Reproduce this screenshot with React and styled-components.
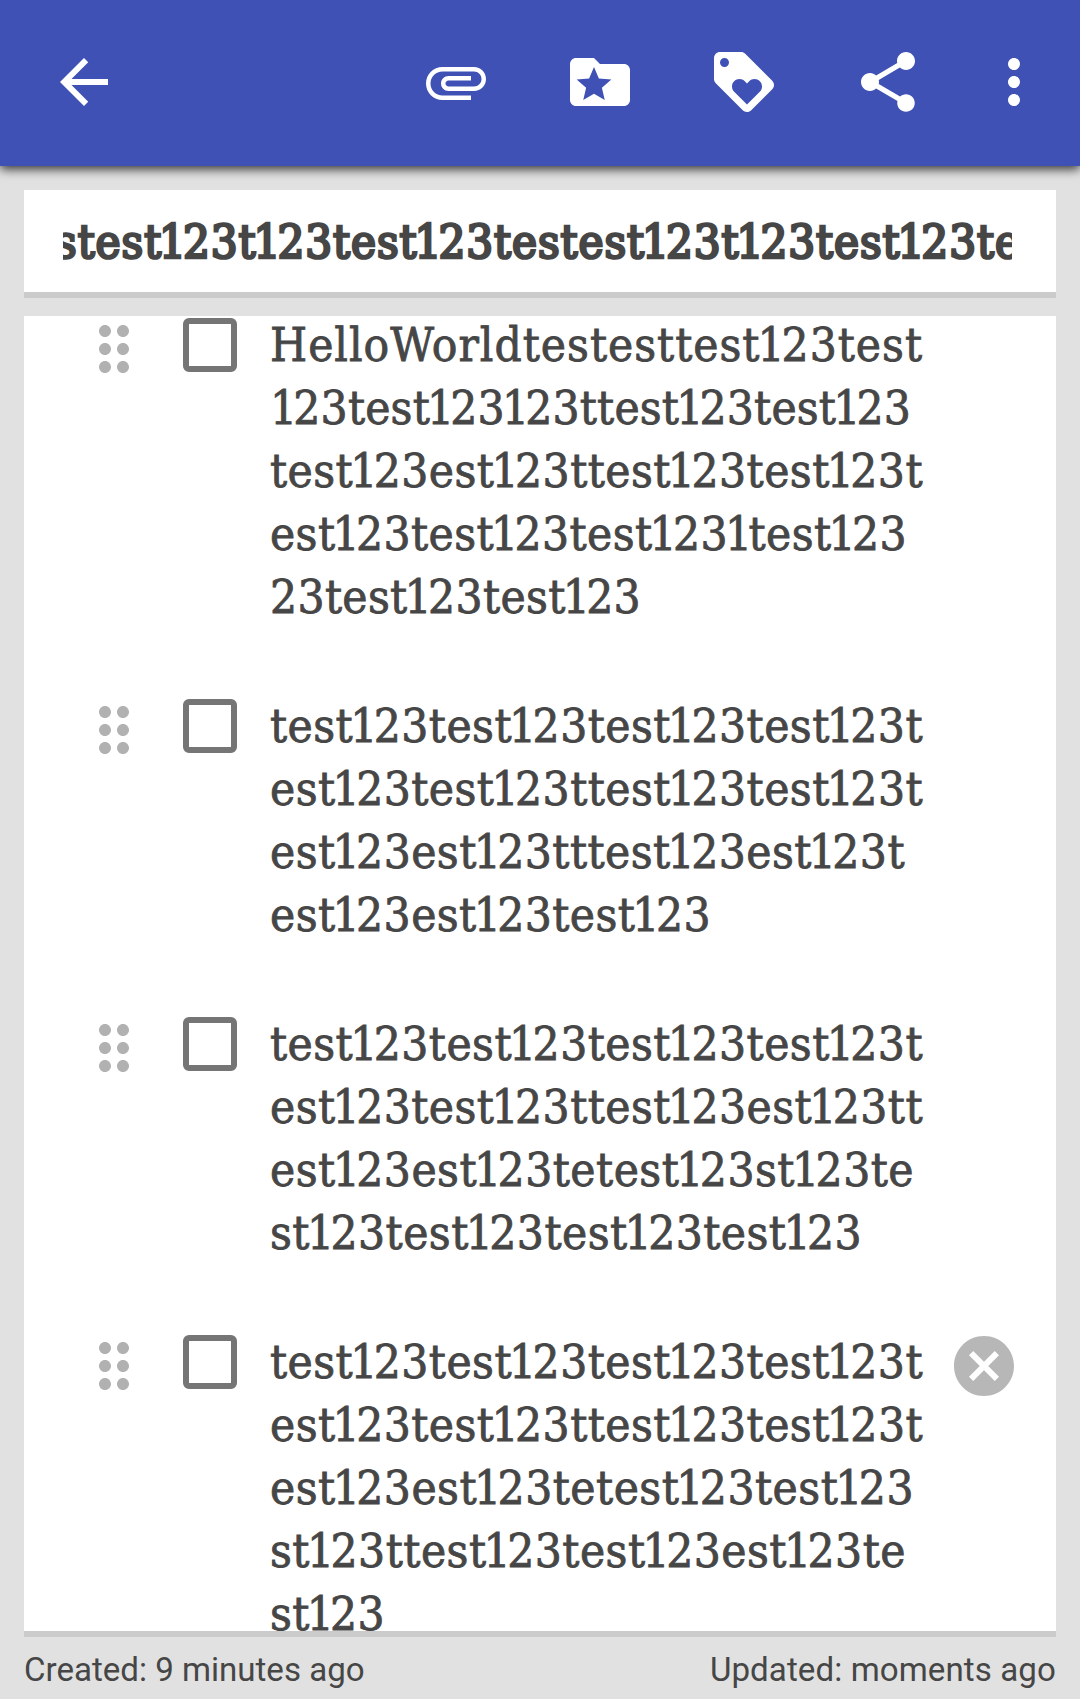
import React, { useLayoutEffect, useRef, useState } from "react";
import styled, { createGlobalStyle } from "styled-components";

const GlobalStyle = createGlobalStyle`
  * { box-sizing: border-box; }
  body { margin: 0; background: #e1e1e1; }
`;

const slab = `"Roboto Slab", "DejaVu Serif Condensed", "DejaVu Serif", serif`;

const Screen = styled.div`
  display: flex;
  flex-direction: column;
  height: 1699px;
  width: 1080px;
  background: #e1e1e1;
  color: #464646;
  overflow: hidden;
`;

const Toolbar = styled.header`
  display: flex;
  align-items: center;
  flex: none;
  height: 166px;
  padding: 0 30px 2px 48px;
  background: #3f51b5;
  color: #fff;
  box-shadow: 0 3px 10px rgba(0, 0, 0, 0.8);
`;

const Actions = styled.div`
  display: flex;
  gap: 72px;
  margin: 0 54px 0 auto;
`;

const IconButton = styled.button`
  display: block;
  width: 72px;
  height: 72px;
  padding: 0;
  border: 0;
  background: none;
  color: ${(p) => p.$color || "inherit"};
  margin: ${(p) => p.$margin || 0};
  flex: none;
`;

const Glyph = styled.svg`
  display: block;
  width: 72px;
  height: 72px;
  fill: currentColor;
`;

const Card = styled.section`
  flex: none;
  margin: ${(p) => p.$top}px 24px 0;
  height: ${(p) => p.$height}px;
  background: #fff;
  border-bottom: 6px solid #cbcbcb;
  overflow: hidden;
`;

const TitleField = styled.div`
  margin: 0 44px 0 39px;
  height: 102px;
  overflow: hidden;
  font: 400 47px/104px ${slab};
  -webkit-text-stroke: 2.6px #464646;
`;

const TitleText = styled.div`
  width: max-content;
  margin-left: -8px;
  letter-spacing: var(--track);
`;

const Item = styled.div`
  display: flex;
  align-items: flex-start;
  padding-left: 54px;
  margin-bottom: 66px;
`;

const Checkbox = styled.span`
  flex: none;
  width: 54px;
  height: 54px;
  margin: 2px 33px 0 33px;
  border: 6px solid #757575;
  border-radius: 6px;
`;

const Lines = styled.div`
  width: 678px;
  flex: none;
  margin: -3px 0 3px;
  font: 400 47.4px/63px ${slab};
  -webkit-text-stroke: 0.8px #464646;
`;

const Line = styled.div`
  width: max-content;
  white-space: pre;
  letter-spacing: var(--track);
`;

const NarrowOne = styled.span`
  margin-left: ${(p) => (p.$first ? 0 : -3)}px;
  letter-spacing: calc(var(--track) - 4px);
`;

const Footer = styled.footer`
  display: flex;
  justify-content: space-between;
  padding: 13px 24px 0;
  font: 400 33.1px/40px Roboto, sans-serif;
`;

const Updated = styled.span`
  letter-spacing: 0.1px;
`;

function Icon({ d }) {
  return (
    <Glyph viewBox="0 0 24 24" aria-hidden="true">
      <path d={d} />
    </Glyph>
  );
}

const icons = {
  back: "M20 11H7.83l5.59-5.59L12 4l-8 8 8 8 1.41-1.41L7.83 13H20v-2z",
  attachment:
    "M7.5 18C4.46 18 2 15.54 2 12.5S4.46 7 7.5 7H18c2.21 0 4 1.79 4 4s-1.79 4-4 4H9.5C8.12 15 7 13.88 7 12.5S8.12 10 9.5 10H17v1.5H9.5c-.55 0-1 .45-1 1s.45 1 1 1H18c1.38 0 2.5-1.12 2.5-2.5S19.38 8.5 18 8.5H7.5c-2.21 0-4 1.79-4 4s1.79 4 4 4H17V18H7.5z",
  folder:
    "M20 6h-8l-2-2H4c-1.1 0-1.99.9-1.99 2L2 18c0 1.1.9 2 2 2h16c1.1 0 2-.9 2-2V8c0-1.1-.9-2-2-2zm-6.42 12L10 15.9 6.42 18l.95-4.07-3.16-2.74 4.16-.36L10 7l1.63 3.84 4.16.36-3.16 2.74.95 4.06z",
  tag: "M21.41 11.58l-9-9C12.05 2.22 11.55 2 11 2H4c-1.1 0-2 .9-2 2v7c0 .55.22 1.05.59 1.42l9 9c.36.36.86.58 1.41.58.55 0 1.05-.22 1.41-.59l7-7c.37-.36.59-.86.59-1.41 0-.55-.23-1.06-.59-1.42zM5.5 7C4.67 7 4 6.33 4 5.5S4.67 4 5.5 4 7 4.67 7 5.5 6.33 7 5.5 7zm11.77 8.27L13 19.54l-4.27-4.27C8.28 14.81 8 14.19 8 13.5c0-1.38 1.12-2.5 2.5-2.5.69 0 1.32.28 1.77.74l.73.72.73-.73c.45-.45 1.08-.73 1.77-.73 1.38 0 2.5 1.12 2.5 2.5 0 .69-.28 1.32-.73 1.77z",
  share:
    "M18 16.08c-.76 0-1.44.3-1.96.77L8.91 12.7c.05-.23.09-.46.09-.7s-.04-.47-.09-.7l7.05-4.11c.54.5 1.25.81 2.04.81 1.66 0 3-1.34 3-3s-1.34-3-3-3-3 1.34-3 3c0 .24.04.47.09.7L8.04 9.81C7.5 9.31 6.79 9 6 9c-1.66 0-3 1.34-3 3s1.34 3 3 3c.79 0 1.5-.31 2.04-.81l7.12 4.16c-.05.21-.08.43-.08.65 0 1.61 1.31 2.92 2.92 2.92s2.92-1.31 2.92-2.92-1.31-2.92-2.92-2.92z",
  more: "M12 8c1.1 0 2-.9 2-2s-.9-2-2-2-2 .9-2 2 .9 2 2 2zm0 2c-1.1 0-2 .9-2 2s.9 2 2 2 2-.9 2-2-.9-2-2-2zm0 6c-1.1 0-2 .9-2 2s.9 2 2 2 2-.9 2-2-.9-2-2-2z",
  drag: "M11 18c0 1.1-.9 2-2 2s-2-.9-2-2 .9-2 2-2 2 .9 2 2zm-2-8c-1.1 0-2 .9-2 2s.9 2 2 2 2-.9 2-2-.9-2-2-2zm0-6c-1.1 0-2 .9-2 2s.9 2 2 2 2-.9 2-2-.9-2-2-2zm6 4c1.1 0 2-.9 2-2s-.9-2-2-2-2 .9-2 2 .9 2 2 2zm0 2c-1.1 0-2 .9-2 2s.9 2 2 2 2-.9 2-2-.9-2-2-2zm0 6c-1.1 0-2 .9-2 2s.9 2 2 2 2-.9 2-2-.9-2-2-2z",
  remove:
    "M12 2C6.47 2 2 6.47 2 12s4.47 10 10 10 10-4.47 10-10S17.53 2 12 2zm5 13.59L15.59 17 12 13.41 8.41 17 7 15.59 10.59 12 7 8.41 8.41 7 12 10.59 15.59 7 17 8.41 13.41 12 17 15.59z",
};

// Spreads the letters so that a run of text fills the given width.
function useTracking(width, length) {
  const ref = useRef(null);
  const [spacing, setSpacing] = useState(0);
  useLayoutEffect(() => {
    const natural = ref.current.getBoundingClientRect().width;
    setSpacing((width - natural) / length);
  }, [width, length]);
  return [ref, { "--track": `${spacing}px` }];
}

// Sets every "1" narrower than the other figures.
function Figures({ text }) {
  return text
    .split(/(1)/)
    .filter(Boolean)
    .map((part, i) =>
      part === "1" ? <NarrowOne key={i} $first={i === 0}>1</NarrowOne> : part
    );
}

function NoteLine({ text, width }) {
  const [ref, style] = useTracking(width + 1, text.length);
  return (
    <Line ref={ref} style={style}>
      <Figures text={text} />
    </Line>
  );
}

function Title({ text, width }) {
  const [ref, style] = useTracking(width, text.length);
  return (
    <TitleText ref={ref} style={style}>
      <Figures text={text} />
    </TitleText>
  );
}

const items = [
  [
    ["HelloWorldtestesttest123test", 652],
    ["123test123123ttest123test123", 640],
    ["test123est123ttest123test123t", 652],
    ["est123test123test1231test123", 636],
    ["23test123test123", 370],
  ],
  [
    ["test123test123test123test123t", 652],
    ["est123test123ttest123test123t", 652],
    ["est123est123tttest123est123t", 634],
    ["est123est123test123", 440],
  ],
  [
    ["test123test123test123test123t", 652],
    ["est123test123ttest123est123tt", 652],
    ["est123est123tetest123st123te", 643],
    ["st123test123test123test123", 591],
  ],
  [
    ["test123test123test123test123t", 652],
    ["est123test123ttest123test123t", 652],
    ["est123est123tetest123test123", 643],
    ["st123ttest123test123est123te", 635],
    ["st123", 114],
  ],
];

export default function App() {
  return (
    <Screen>
      <GlobalStyle />
      <Toolbar>
        <IconButton aria-label="Back"><Icon d={icons.back} /></IconButton>
        <Actions>
          <IconButton aria-label="Attach"><Icon d={icons.attachment} /></IconButton>
          <IconButton aria-label="Folder"><Icon d={icons.folder} /></IconButton>
          <IconButton aria-label="Tag"><Icon d={icons.tag} /></IconButton>
          <IconButton aria-label="Share"><Icon d={icons.share} /></IconButton>
        </Actions>
        <IconButton aria-label="More"><Icon d={icons.more} /></IconButton>
      </Toolbar>
      <Card $top={24} $height={108}>
        <TitleField>
          <Title text="stest123t123test123testest123t123test123te" width={966} />
        </TitleField>
      </Card>
      <Card $top={18} $height={1321}>
        {items.map((lines, i) => (
          <Item key={i}>
            <IconButton aria-label="Move" $color="#b1b1b1" $margin="-3px 0 0">
              <Icon d={icons.drag} />
            </IconButton>
            <Checkbox />
            <Lines>
              {lines.map(([text, width], n) => (
                <NoteLine key={n} text={text} width={width} />
              ))}
            </Lines>
            {i === 3 && (
              <IconButton aria-label="Remove" $color="#b7b7b7" $margin="-3px 0 0">
                <Icon d={icons.remove} />
              </IconButton>
            )}
          </Item>
        ))}
      </Card>
      <Footer>
        <span>Created: 9 minutes ago</span>
        <Updated>Updated: moments ago</Updated>
      </Footer>
    </Screen>
  );
}
